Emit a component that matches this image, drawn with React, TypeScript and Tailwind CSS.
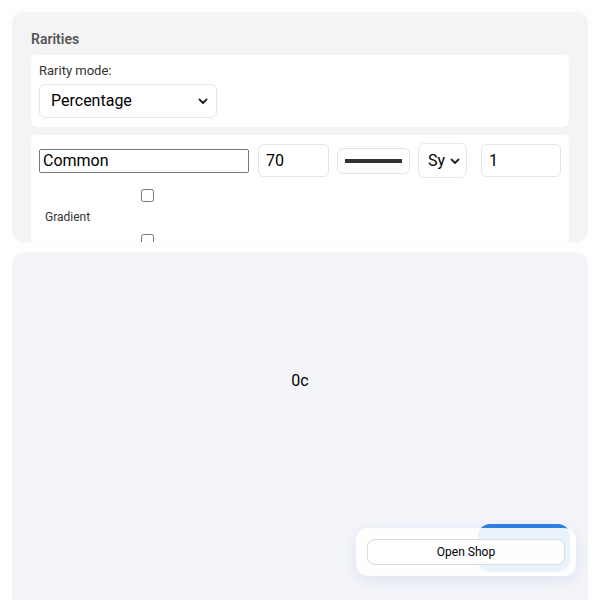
import React from "react";

function RarityRow() {
  return (
    <div className="rounded-md bg-white px-2 pt-2 pb-6">
      <div className="flex items-center">
        <input
          defaultValue="Common"
          className="h-[24px] w-[210px] rounded-[2px] border border-[#767676] px-[3px] text-base text-black outline-none"
        />
        <input
          defaultValue="70"
          className="ml-[9px] h-[33px] w-[71px] rounded-md border border-[#e3e3e3] px-[7px] text-base text-black outline-none"
        />
        <div className="ml-[8px] flex h-[26px] w-[73px] items-center justify-center rounded-md border border-[#e3e3e3]">
          <div className="h-[4px] w-[57px] bg-[#333]" />
        </div>
        <div className="ml-[8px] flex h-[35px] w-[49px] items-center justify-between rounded-md border border-[#e8e8e8] pl-[9px] pr-[6px] text-base text-black">
          <span className="w-[18px] overflow-hidden whitespace-nowrap">Sy</span>
          <svg width="10" height="10" viewBox="0 0 10 10" fill="none">
            <path d="M1.5 3.5 5 7l3.5-3.5" stroke="#222" strokeWidth="1.8" strokeLinecap="round" strokeLinejoin="round" />
          </svg>
        </div>
        <input
          defaultValue="1"
          className="ml-[14px] h-[33px] w-[80px] rounded-md border border-[#e3e3e3] px-[7px] text-base text-black outline-none"
        />
      </div>
      <div className="flex flex-col pt-[11px]">
        <input type="checkbox" className="ml-[102px] h-[13px] w-[13px]" />
        <span className="mt-[7px] pl-[6px] text-xs leading-[16px] text-[#333]">Gradient</span>
        <input type="checkbox" className="ml-[102px] mt-[9px] h-[13px] w-[13px]" />
        <input type="checkbox" className="ml-[102px] mt-[9px] h-[13px] w-[13px]" />
      </div>
    </div>
  );
}

export default function App() {
  return (
    <div className="min-h-[600px] bg-white p-3 font-['Roboto',sans-serif] text-black">
      <div className="h-[230px] overflow-hidden rounded-xl bg-[#f4f4f6] px-[19px] pt-[18px] shadow-[0_0_12px_rgba(0,0,0,0.03)]">
        <div className="text-sm font-semibold leading-[18px] text-[#555]">Rarities</div>
        <div className="mt-[7px] h-[72px] rounded-md bg-white px-2 pt-[7px]">
          <div className="text-[13px] leading-[18px] text-[#333]">Rarity mode:</div>
          <div className="mt-[4px] flex h-[34px] w-[178px] items-center justify-between rounded-md border border-[#e8e8e8] pl-[11px] pr-[8px] text-base">
            <span>Percentage</span>
            <svg width="10" height="10" viewBox="0 0 10 10" fill="none">
              <path d="M1.5 3.5 5 7l3.5-3.5" stroke="#222" strokeWidth="1.8" strokeLinecap="round" strokeLinejoin="round" />
            </svg>
          </div>
        </div>
        <div className="mt-[8px]">
          <RarityRow />
        </div>
      </div>

      <div className="relative mt-[10px] h-[360px] rounded-xl bg-[#f4f5f9] pt-[117px] text-center">
        <div className="text-base leading-[24px]">0c</div>
        <div className="absolute left-[466px] top-[272px] h-[48px] w-[92px] rounded-xl bg-[#2f7de1]" />
        <div className="absolute left-[344px] top-[276px] flex h-[48px] w-[220px] items-center justify-center rounded-xl bg-white/90 shadow-[0_4px_16px_rgba(90,120,200,0.15)]">
          <button className="h-[26px] w-[198px] rounded-lg border border-[#dcdcdc] bg-white/85 text-xs text-black">
            Open Shop
          </button>
        </div>
      </div>
    </div>
  );
}
